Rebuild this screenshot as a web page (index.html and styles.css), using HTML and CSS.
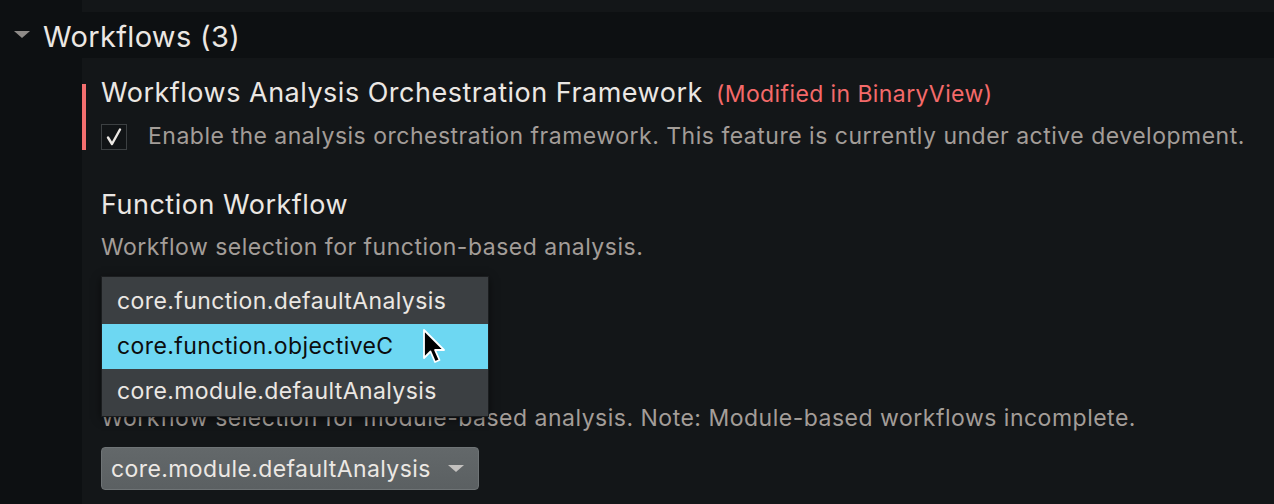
FILE: index.html
```html
<!DOCTYPE html>
<html>
<head>
<meta charset="utf-8">
<link rel="stylesheet" href="styles.css">
</head>
<body>
<div class="topstrip"><div class="gutter"></div><div class="fill"></div></div>
<div class="header">
  <span class="disclosure"></span>
  <span class="header-title">Workflows (3)</span>
</div>
<div class="main">
  <div class="gutter"></div>
  <div class="content">
    <div class="setting modified">
      <div class="setting-title">Workflows Analysis Orchestration Framework <span class="mod">(Modified in BinaryView)</span></div>
      <div class="check-row">
        <span class="checkbox">
          <svg width="20" height="20" viewBox="0 0 20 20"><path d="M4 10.5 L8 17 L16 2.5" fill="none" stroke="#ece8e4" stroke-width="2.4" stroke-linecap="round" stroke-linejoin="round"/></svg>
        </span>
        <span class="desc">Enable the analysis orchestration framework. This feature is currently under active development.</span>
      </div>
    </div>
    <div class="setting">
      <div class="setting-title">Function Workflow</div>
      <div class="desc">Workflow selection for function-based analysis.</div>
      <div class="combo"><span>core.function.objectiveC</span><span class="arrow"></span></div>
      <div class="popup">
        <div class="item">core.function.defaultAnalysis</div>
        <div class="item selected">core.function.objectiveC</div>
        <div class="item">core.module.defaultAnalysis</div>
        <svg class="cursor" width="26" height="38" viewBox="0 0 26 38"><path d="M2 2 L2 30 L8.5 23.5 L13 34 L17.5 32 L13 22 L22 22 Z" fill="#000" stroke="#fff" stroke-width="1.8" stroke-linejoin="round"/></svg>
      </div>
    </div>
    <div class="setting last">
      <div class="setting-title">Module Workflow</div>
      <div class="desc">Workflow selection for module-based analysis. Note: Module-based workflows incomplete.</div>
      <div class="combo"><span>core.module.defaultAnalysis</span><span class="arrow"></span></div>
    </div>
  </div>
</div>
</body>
</html>
```
FILE: styles.css
```css
html, body {
  margin: 0;
  padding: 0;
  background: #0d1012;
  font-family: Inter, "Noto Sans", sans-serif;
  overflow: hidden;
}
.topstrip {
  display: flex;
  height: 12px;
}
.gutter {
  width: 82px;
  flex: none;
  background: #0d1012;
}
.topstrip .fill {
  flex: 1;
  background: #131618;
}
.header {
  height: 46px;
  box-sizing: border-box;
  background: #0d1012;
  display: flex;
  align-items: flex-start;
  padding-top: 7px;
}
.disclosure {
  width: 0;
  height: 0;
  margin-left: 14px;
  margin-right: 13px;
  margin-top: 12px;
  border-left: 8px solid transparent;
  border-right: 8px solid transparent;
  border-top: 7px solid #8e8b88;
}
.header-title {
  color: #ebe7e3;
  font-size: 29px;
  line-height: 36px;
  letter-spacing: 0.35px;
}
.main {
  display: flex;
  height: 446px;
}
.content {
  flex: 1;
  background: #131618;
  padding-top: 26px;
}
.setting {
  position: relative;
  padding-left: 19px;
  margin-top: 41px;
}
.setting.modified {
  display: flow-root;
  margin-top: 0;
  border-left: 4px solid #f36f6f;
  padding-left: 15px;
  height: 66px;
}
.modified + .setting {
  margin-top: 39px;
}
.setting-title {
  color: #ebe7e3;
  font-size: 27px;
  line-height: 32px;
  letter-spacing: 0.5px;
  white-space: nowrap;
}
.modified .setting-title {
  margin-top: -7px;
}
.mod {
  color: #f46a6a;
  font-size: 23px;
  letter-spacing: 0.4px;
  margin-left: 5px;
}
.check-row {
  display: flex;
  align-items: center;
  margin-top: 14px;
}
.checkbox {
  width: 26px;
  height: 26px;
  box-sizing: border-box;
  border: 1px solid #3c4042;
  background: #111416;
  display: flex;
  align-items: center;
  justify-content: center;
  margin-right: 21px;
  flex: none;
}
.desc {
  color: #a39d98;
  font-size: 23px;
  line-height: 28px;
  letter-spacing: 0.5px;
  white-space: nowrap;
  margin-top: 12px;
}
.check-row .desc {
  margin-top: -2px;
}
.combo {
  margin-top: 15px;
  width: 378px;
  height: 43px;
  box-sizing: border-box;
  border: 1px solid #6f7476;
  border-radius: 4px;
  background: linear-gradient(#63686a, #5b6062);
  color: #ece8e4;
  font-size: 23px;
  letter-spacing: 0.4px;
  display: flex;
  align-items: center;
  justify-content: space-between;
  padding: 0 14px 0 9px;
}
.arrow {
  width: 0;
  height: 0;
  border-left: 8px solid transparent;
  border-right: 8px solid transparent;
  border-top: 7px solid #c3c1bf;
}
.popup {
  position: absolute;
  z-index: 10;
  left: 19px;
  top: 87px;
  width: 388px;
  box-sizing: border-box;
  border: 1px solid #1b1d1f;
  background: #3b3f42;
  padding: 2px 0;
  box-shadow: 0 2px 8px rgba(0,0,0,0.5);
}
.item {
  height: 45px;
  line-height: 45px;
  padding-left: 15px;
  color: #ebe7e3;
  font-size: 23px;
  letter-spacing: 0.4px;
}
.item.selected {
  background: #6dd7f2;
  color: #0b0d0e;
}
.cursor {
  position: absolute;
  left: 320px;
  top: 51px;
}
```
